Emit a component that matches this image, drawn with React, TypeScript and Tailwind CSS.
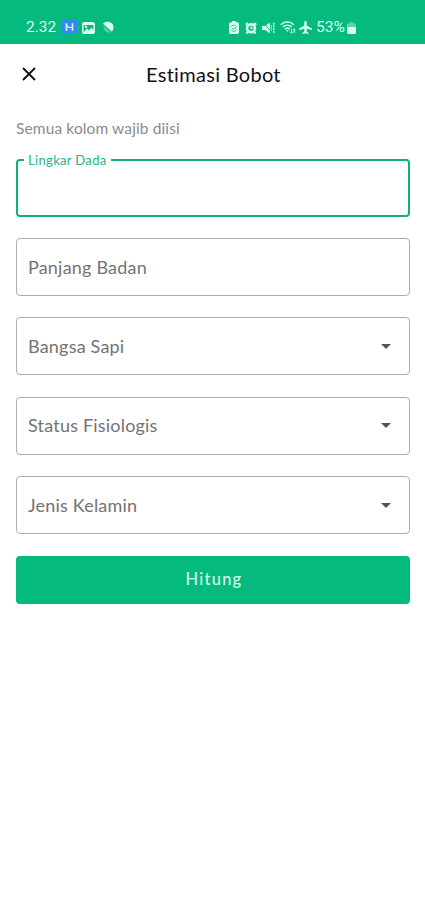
import { useState } from "react";

const labels = ["Bangsa Sapi", "Status Fisiologis", "Jenis Kelamin"];

function StatusBar() {
    return (
        <div className="flex h-[44px] items-start bg-[#04ba7e] pt-[18px] pl-[26px] text-[#d9fff0] font-['Roboto',sans-serif]">
            <span className="w-[36px] text-[15.5px] leading-[19px]">2.32</span>
            <svg className="mt-[2px] h-[14px] w-[15px]" viewBox="0 0 15 14">
                <rect width="15" height="14" rx="1" fill="#3289f2" />
                <path d="M4.500 3.300v7.400M10.500 3.300v7.400" stroke="#d9f2ff" strokeWidth="1.700" fill="none" />
                <path d="M4.500 5.500 7 7.500h3.500" stroke="#d9f2ff" strokeWidth="1.200" fill="none" />
            </svg>
            <svg className="mt-[4px] ml-[5px] h-[12px] w-[13px]" viewBox="0 0 13 12">
                <rect x=".8" y=".8" width="11.4" height="10.4" rx="1.8" fill="none" stroke="currentColor" strokeWidth="1.6" />
                <path d="M1 1h11v2H1zM2 9.8 5 6.6l2 1.8 2.2-3L12 9v2H2z" fill="currentColor" />
                <circle cx="4" cy="4.8" r="1.2" fill="currentColor" />
            </svg>
            <svg className="mt-[3px] ml-[7px] h-[13px] w-[12px]" viewBox="0 0 12 13">
                <path d="M1 2.6C4-.2 8.600 0 10.700 3.200c1.300 2.300 1 5.500-.9 7.600z" fill="currentColor" />
                <path d="M1.300 4.200 8.800 11.400C5 12.700.9 9.500 1.300 4.200z" fill="currentColor" opacity=".35" />
            </svg>

            <svg className="mt-[3px] ml-[115px] h-[13px] w-[10px]" viewBox="0 0 10 13">
                <path d="M3 0h4v1.300h1.200Q10 1.300 10 3v8.200Q10 13 8.200 13H1.800Q0 13 0 11.200V3q0-1.700 1.800-1.700H3z" fill="currentColor" />
                <path d="M2.200 6.200C3 3.700 6.500 3.600 7.600 5.500M7.800 8.500C6.800 10.800 3.300 10.900 2.300 9M3 7.100l1.400 1.300L7 6.200" fill="none" stroke="#04ba7e" strokeWidth=".8" />
            </svg>
            <svg className="mt-[4px] ml-[6px] h-[12px] w-[12px]" viewBox="0 0 12 12">
                <path d="M.8 2.800 3 .9M11.200 2.800 9 .9M2.600 10l-1.300 1.500M9.400 10l1.300 1.500" stroke="currentColor" strokeWidth="2" />
                <circle cx="6" cy="6.200" r="4" fill="none" stroke="currentColor" strokeWidth="2.600" />
                <path d="M6 4v2.400h2" fill="none" stroke="currentColor" strokeWidth="1.100" />
            </svg>
            <svg className="mt-[4px] ml-[5px] h-[12px] w-[13px]" viewBox="0 0 13 12">
                <path d="M0 4h3l5-3.500v11L3 8H0z" fill="currentColor" />
                <path d="M9.300 3v6" stroke="currentColor" strokeWidth="1" opacity=".7" />
                <path d="M11.700.8v10.400" stroke="currentColor" strokeWidth="1.500" strokeDasharray="2 .7" />
                <path d="m1.500.5 7.500 9" stroke="#04ba7e" strokeWidth="1" />
            </svg>
            <svg className="mt-[3px] ml-[5px] h-[13px] w-[16px]" viewBox="0 0 16 13">
                <path d="M.8 3.700C4.500.2 10.200.2 13.800 3.700M2.800 6c2.700-2.500 6.400-2.500 9 0M5 8.200c1.500-1.300 3.300-1.300 4.700 0" fill="none" stroke="currentColor" strokeWidth="1.500" />
                <path d="m5.800 9.300 1.500 1.500 1.600-1.500z" fill="currentColor" />
                <path d="M11.500 7.500v4.500m-1.400-1.300 1.400 1.500 1.300-1.500M14.300 12V8m-1.200 1.200L14.300 8l1.200 1.200" fill="none" stroke="currentColor" strokeWidth=".9" />
            </svg>
            <svg className="mt-[3px] ml-[3px] h-[13px] w-[13px]" viewBox="0 0 13 13">
                <path d="M6.500 0c.8 0 1.200.7 1.200 1.500v3L13 7.500V9L7.700 7.800v2.800L9.500 12v1l-3-.7-3 .7v-1l1.800-1.400V7.800L0 9V7.500l5.300-3v-3C5.300.7 5.700 0 6.500 0z" fill="currentColor" />
            </svg>
            <span className="ml-[4px] w-[31px] text-[15.5px] leading-[19px]">53%</span>
            <svg className="mt-[4px] h-[12px] w-[9px]" viewBox="0 0 9 12">
                <path d="M3 0h3v1.300h1.500Q9 1.300 9 3v2H0V3q0-1.700 1.500-1.700H3z" fill="currentColor" opacity=".4" />
                <path d="M0 5h9v5.500Q9 12 7.500 12h-6Q0 12 0 10.500z" fill="currentColor" />
            </svg>
        </div>
    );
}

function SelectField({ label }: { label: string }) {
    return (
        <button
            type="button"
            className="flex h-[58px] w-full items-center justify-between rounded-[4px] border border-[#adadad] pr-[18px] pl-[11px] text-left text-[18px] tracking-[0.200px] text-[#737373]"
        >
            <span>{label}</span>
            <svg className="h-[5px] w-[10px]" viewBox="0 0 10 5">
                <path d="M0 0h10L5 5z" fill="#555555" />
            </svg>
        </button>
    );
}

export default function App() {
    const [chest, setChest] = useState("");
    const [bodyLength, setBodyLength] = useState("");

    return (
        <div className="min-h-screen bg-white font-['Lato',sans-serif]">
            <StatusBar />
            <header className="flex h-[60px] items-center pl-[22px]">
                <button type="button">
                    <svg className="h-[14px] w-[14px]" viewBox="0 0 14 14">
                        <path d="m1 1 12 12M13 1 1 13" stroke="#111111" strokeWidth="1.900" />
                    </svg>
                </button>
                <h1 className="ml-[110px] text-[20px] tracking-[0.300px] text-[#111111]">Estimasi Bobot</h1>
            </header>
            <form className="pt-[14px] pr-[15px] pl-4" onSubmit={e => e.preventDefault()}>
                <p className="text-[15.5px] leading-[20px] tracking-[0.120px] text-[#8b8b8b]">Semua kolom wajib diisi</p>
                <fieldset className="mt-[14px] h-[65px] rounded-[4px] border-2 border-[#12ae7c] pl-[6px]">
                    <legend className="px-[4px] text-[13px] leading-[16px] tracking-[0.330px] text-[#25b487]">Lingkar Dada</legend>
                    <input
                        value={chest}
                        onChange={e => setChest(e.target.value)}
                        className="h-[40px] w-full px-1 text-[18px] outline-none"
                    />
                </fieldset>
                <div className="mt-[21px] flex flex-col gap-[21.400px]">
                    <input
                        placeholder="Panjang Badan"
                        value={bodyLength}
                        onChange={e => setBodyLength(e.target.value)}
                        className="h-[58px] w-full rounded-[4px] border border-[#adadad] px-[11px] text-[18px] tracking-[0.200px] outline-none placeholder:text-[#737373]"
                    />
                    {labels.map(label => (
                        <SelectField key={label} label={label} />
                    ))}
                    <button
                        type="submit"
                        className="h-[48px] rounded-[4px] bg-[#04ba7e] pl-[2px] text-[16.500px] font-medium tracking-[1.200px] text-[#d5faeb]"
                    >
                        Hitung
                    </button>
                </div>
            </form>
        </div>
    );
}
